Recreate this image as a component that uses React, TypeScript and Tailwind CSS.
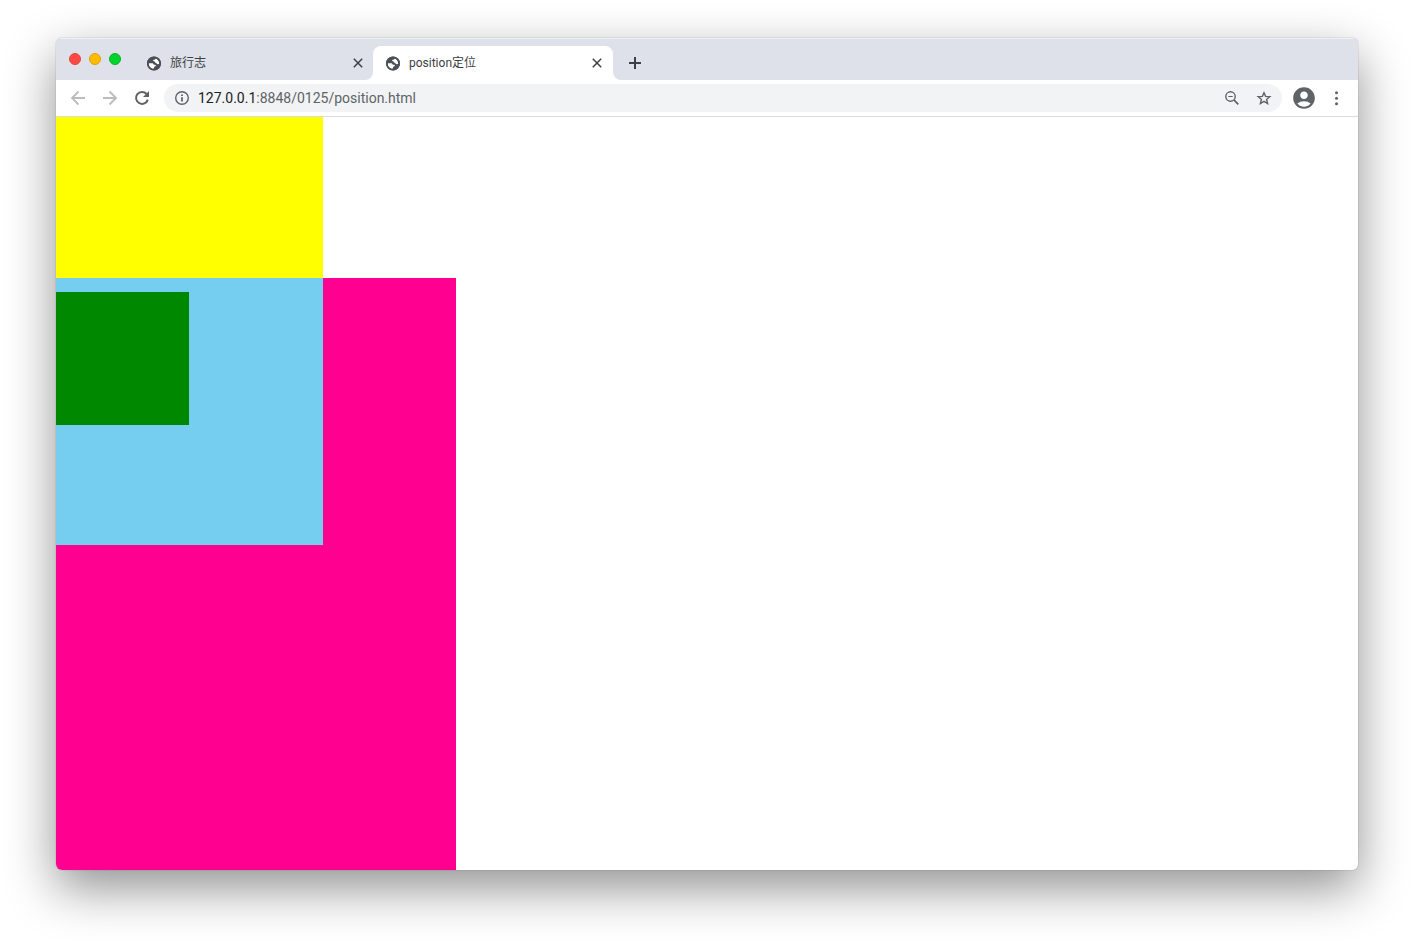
import { useState } from 'react';
import { MdAccountCircle } from 'react-icons/md';

const tabs = [
  { id: 'travel', title: '旅行志' },
  { id: 'position', title: 'position定位' },
];

function GlobeIcon() {
  return (
    <svg viewBox="0 0 15 15" className="size-[15px] shrink-0" aria-hidden="true">
      <circle cx="7" cy="7.500" r="7" fill="#4c5056" />
      <path
        d="M1.600 7.200h3.200c1.300 0 1.900.7 2 1.500h1.300c.9 0 1 .9.600 1.400-.5.600-1.400.5-1.600 1.300-.2.700-.6 1.200-1.300 1.500C3.300 12.200 1.600 10.100 1.600 7.200z"
        fill="#fff"
      />
      <path
        d="M8.500 2.400c-.1.900-.7 1.300-1.700 1.400-1 .1-.9 1.400.1 1.500 1.200.1.900 1.400 1.900 1.600 1.100.2 1.200 1.200 2 1.300.6.100 1-.1 1.500-.1C12.400 5.300 11 3.100 8.500 2.400z"
        fill="#fff"
      />
      <circle cx="7" cy="7.500" r="6.200" fill="none" stroke="#4c5056" strokeWidth="1.600" />
    </svg>
  );
}

function CloseIcon() {
  return (
    <svg viewBox="0 0 14 14" className="size-3.5" fill="none" stroke="currentColor" strokeWidth="1.5" aria-hidden="true">
      <path d="M2.800 2.800l8.400 8.400M11.200 2.800l-8.400 8.400" />
    </svg>
  );
}

function PlusIcon() {
  return (
    <svg viewBox="0 0 20 20" className="size-5" fill="none" stroke="currentColor" strokeWidth="2" aria-hidden="true">
      <path d="M10 4v12M4 10h12" />
    </svg>
  );
}

function BackIcon() {
  return (
    <svg viewBox="0 0 20 20" className="size-5" fill="none" stroke="currentColor" strokeWidth="1.800" aria-hidden="true">
      <path d="M17 10H4.500M10.500 3.500L4 10l6.500 6.500" />
    </svg>
  );
}

function ForwardIcon() {
  return (
    <svg viewBox="0 0 20 20" className="size-5" fill="none" stroke="currentColor" strokeWidth="1.800" aria-hidden="true">
      <path d="M3 10h12.500M9.500 3.500L16 10l-6.500 6.500" />
    </svg>
  );
}

function ReloadIcon() {
  return (
    <svg viewBox="0 0 20 20" className="size-5" aria-hidden="true">
      <path d="M14.600 6A6 6 0 1 0 15.800 11.600" fill="none" stroke="currentColor" strokeWidth="2" />
      <path d="M17 3v6h-6z" fill="currentColor" />
    </svg>
  );
}

function InfoIcon() {
  return (
    <svg viewBox="0 0 16 16" className="size-4" aria-hidden="true">
      <circle cx="8" cy="8" r="6.300" fill="none" stroke="currentColor" strokeWidth="1.4" />
      <path d="M7.100 7.200h1.800v4.300H7.100zM7.100 4.400h1.800V6H7.100z" fill="currentColor" />
    </svg>
  );
}

function ZoomOutIcon() {
  return (
    <svg viewBox="0 0 16 16" className="size-4" fill="none" stroke="currentColor" strokeWidth="1.4" aria-hidden="true">
      <circle cx="6.500" cy="6.500" r="4.700" />
      <path d="M4.300 6.500h4.400" strokeWidth="1.200" />
      <path d="M9.900 9.900l4.400 4.400" strokeWidth="1.700" />
    </svg>
  );
}

function StarIcon() {
  return (
    <svg viewBox="0 0 16 16" className="size-4" fill="none" stroke="currentColor" strokeWidth="1.4" aria-hidden="true">
      <path d="M8 2.700l1.600 3.700 4.200.3-3.200 2.700 1 4.100L8 11.300l-3.600 2.200 1-4.100-3.200-2.700 4.200-.3z" />
    </svg>
  );
}

function MenuIcon() {
  return (
    <svg viewBox="0 0 20 20" className="size-5" fill="currentColor" aria-hidden="true">
      <circle cx="10.500" cy="4.700" r="1.500" />
      <circle cx="10.500" cy="10.200" r="1.500" />
      <circle cx="10.500" cy="15.700" r="1.500" />
    </svg>
  );
}

interface TabProps {
  title: string;
  active: boolean;
  onSelect: () => void;
}

function Tab({ title, active, onSelect }: TabProps) {
  return (
    <div className={`relative flex h-full w-60 items-center rounded-t-lg pr-[9px] pl-[13px] ${active ? '-ml-px bg-white' : ''}`}>
      {active && (
        <>
          <span className="absolute bottom-0 -left-2 size-2 bg-white">
            <span className="block size-2 rounded-br-lg bg-[#dee1e9]" />
          </span>
          <span className="absolute -right-2 bottom-0 size-2 bg-white">
            <span className="block size-2 rounded-bl-lg bg-[#dee1e9]" />
          </span>
        </>
      )}
      <button type="button" onClick={onSelect} className="flex min-w-0 flex-1 items-center gap-2 text-left">
        <GlobeIcon />
        <span className="truncate text-xs text-[#3c4043]">{title}</span>
      </button>
      <button type="button" aria-label={`Close ${title}`} className="text-[#3c4043]">
        <CloseIcon />
      </button>
    </div>
  );
}

function TabStrip() {
  const [activeTab, setActiveTab] = useState('position');

  return (
    <div className="flex h-[42px] items-end border-t border-[#f0f1f4] bg-[#dee1e9]">
      <div className="flex h-full w-[78px] shrink-0 items-center gap-2 pb-0.5 pl-[13px]">
        <button type="button" aria-label="Close window" className="size-3 rounded-full border border-[#e24640] bg-[#ff4a43]" />
        <button type="button" aria-label="Minimize window" className="size-3 rounded-full border border-[#e0a10a] bg-[#ffbb00]" />
        <button type="button" aria-label="Zoom window" className="size-3 rounded-full border border-[#0fae27] bg-[#00d42c]" />
      </div>
      <div className="flex h-[34px] items-center">
        {tabs.map((tab) => (
          <Tab
            key={tab.id}
            title={tab.title}
            active={tab.id === activeTab}
            onSelect={() => setActiveTab(tab.id)}
          />
        ))}
        <button type="button" aria-label="New tab" className="ml-3 text-[#3c4043]">
          <PlusIcon />
        </button>
      </div>
    </div>
  );
}

function Toolbar() {
  return (
    <div className="flex h-[37px] items-center border-b border-[#dadce0] bg-white px-3 text-[#5f6368]">
      <div className="flex items-center gap-3">
        <button type="button" aria-label="Back" className="text-[#babcbe]">
          <BackIcon />
        </button>
        <button type="button" aria-label="Forward" className="text-[#babcbe]">
          <ForwardIcon />
        </button>
        <button type="button" aria-label="Reload">
          <ReloadIcon />
        </button>
      </div>
      <div className="ml-3 flex h-7 flex-1 items-center rounded-full bg-[#f1f3f4] px-2.5">
        <button type="button" aria-label="Site information">
          <InfoIcon />
        </button>
        <a href="#position" className="ml-2 flex-1 text-sm text-[#5f6368]">
          <span className="text-[#202124]">127.0.0.1</span>:8848/0125/position.html
        </a>
        <button type="button" aria-label="Zoom out">
          <ZoomOutIcon />
        </button>
        <button type="button" aria-label="Bookmark this page" className="ml-4">
          <StarIcon />
        </button>
      </div>
      <button type="button" aria-label="Profile" className="ml-[9px]">
        <MdAccountCircle className="size-[26px]" />
      </button>
      <button type="button" aria-label="Menu" className="ml-[9px]">
        <MenuIcon />
      </button>
    </div>
  );
}

function PositionPage() {
  return (
    <main className="flex flex-1 flex-col bg-white">
      <div className="h-[161px] w-[267px] bg-[#ffff00]" />
      <div className="w-[400px] flex-1 bg-[#ff0090]">
        <div className="h-[267px] w-[267px] bg-[#75cdf0] pt-3.5">
          <div className="size-[133px] bg-[#008800]" />
        </div>
      </div>
    </main>
  );
}

export default function App() {
  return (
    <div className="flex min-h-screen flex-col bg-white px-14 pt-[38px] pb-[74px] font-[Roboto,'Noto_Sans_CJK_SC',sans-serif]">
      <div className="flex flex-1 flex-col rounded-md shadow-[0_0_1px_rgba(0,0,0,0.6),0_18px_50px_rgba(0,0,0,0.44)]">
        <div className="flex flex-1 flex-col overflow-hidden rounded-md">
          <TabStrip />
          <Toolbar />
          <PositionPage />
        </div>
      </div>
    </div>
  );
}
